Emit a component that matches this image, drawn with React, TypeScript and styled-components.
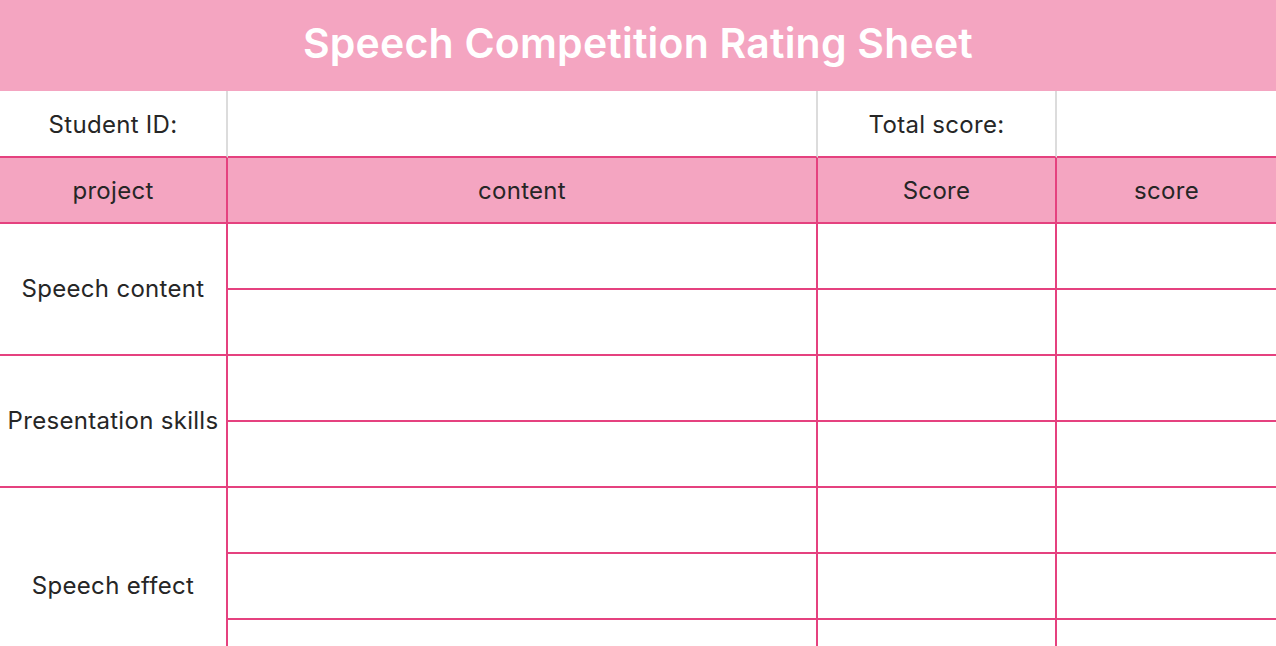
import styled, { createGlobalStyle } from "styled-components";

const GlobalStyle = createGlobalStyle`
    * { box-sizing: border-box; }
    body {
        margin: 0;
        background: #ffffff;
        font-family: Inter, "Noto Sans", sans-serif;
        color: #262626;
    }
`;

const PINK = "#f4a5c1";
const LINE = "#e5417f";
const GRAY = "#dcdcdc";

const groups = [
    { name: "Speech content", rows: 2 },
    { name: "Presentation skills", rows: 2 },
    { name: "Speech effect", rows: 3 },
];

const App = () => {
    let row = 3;
    return (
        <>
            <GlobalStyle />
            <Title>Speech Competition Rating Sheet</Title>
            <Sheet>
                <InfoCell $right>Student ID:</InfoCell>
                <InfoCell $right />
                <InfoCell $right>Total score:</InfoCell>
                <InfoCell />

                <HeadCell>project</HeadCell>
                <HeadCell>content</HeadCell>
                <HeadCell>Score</HeadCell>
                <HeadCell $last>score</HeadCell>

                {groups.map((g) => {
                    const start = row;
                    row += g.rows;
                    return [
                        <ItemCell key={g.name} style={{ gridRow: `${start} / span ${g.rows}` }}>
                            {g.name}
                        </ItemCell>,
                        ...Array.from({ length: g.rows }).flatMap((_, i) => [
                            <Cell key={`${g.name}-a${i}`} />,
                            <Cell key={`${g.name}-b${i}`} />,
                            <Cell key={`${g.name}-c${i}`} $last />,
                        ]),
                    ];
                })}
            </Sheet>
        </>
    );
};

export default App;

const Title = styled.h1`
    margin: 0;
    height: 91px;
    background: ${PINK};
    color: #ffffff;
    font-size: 41px;
    font-weight: 600;
    letter-spacing: 0.2px;
    display: flex;
    align-items: center;
    justify-content: center;
    padding-bottom: 5px;
`;

const Sheet = styled.div`
    display: grid;
    grid-template-columns: 228px 590px 239px 1fr;
    grid-template-rows: 67px 66px;
    grid-auto-rows: 66px;
    width: 1276px;
    font-size: 24px;
    letter-spacing: 0.3px;
`;

const InfoCell = styled.div<{ $right?: boolean }>`
    display: flex;
    align-items: center;
    justify-content: center;
    border-right: ${(p) => (p.$right ? `2px solid ${GRAY}` : "none")};
    border-bottom: 2px solid ${LINE};
    padding-top: 1px;
`;

const HeadCell = styled.div<{ $last?: boolean }>`
    display: flex;
    align-items: center;
    justify-content: center;
    background: ${PINK};
    border-right: ${(p) => (p.$last ? "none" : `2px solid ${LINE}`)};
    border-bottom: 2px solid ${LINE};
`;

const ItemCell = styled.div`
    grid-column: 1;
    display: flex;
    align-items: center;
    justify-content: center;
    white-space: nowrap;
    border-right: 2px solid ${LINE};
    border-bottom: 2px solid ${LINE};
    padding-bottom: 2px;
`;

const Cell = styled.div<{ $last?: boolean }>`
    border-right: ${(p) => (p.$last ? "none" : `2px solid ${LINE}`)};
    border-bottom: 2px solid ${LINE};
`;
